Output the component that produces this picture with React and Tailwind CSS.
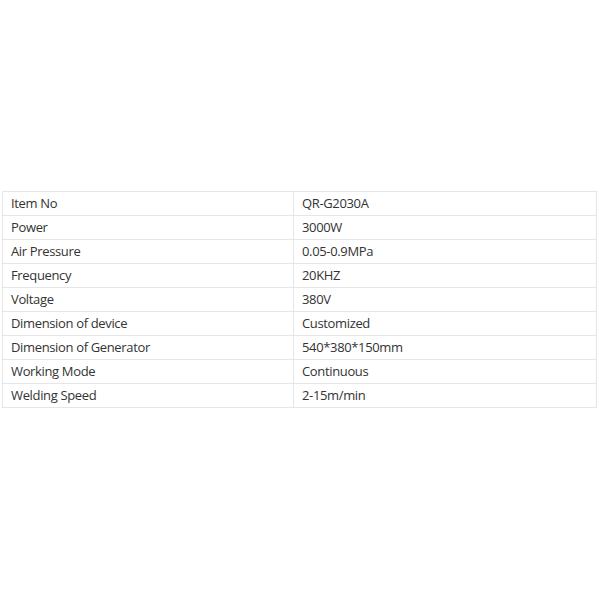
const rows = [
  ['Item No', 'QR-G2030A'],
  ['Power', '3000W'],
  ['Air Pressure', '0.05-0.9MPa'],
  ['Frequency', '20KHZ'],
  ['Voltage', '380V'],
  ['Dimension of device', 'Customized'],
  ['Dimension of Generator', '540*380*150mm'],
  ['Working Mode', 'Continuous'],
  ['Welding Speed', '2-15m/min'],
]

export default function App() {
  return (
    <div className="w-[600px] h-[600px] bg-white pt-[191px] pl-[2px]" style={{ fontFamily: '"Open Sans", "Noto Sans", sans-serif' }}>
      <table className="w-[595px] border-collapse table-fixed text-[13px] tracking-[-0.35px] text-[#333]">
        <tbody>
          {rows.map(([k, v]) => (
            <tr key={k} className="h-[24px]">
              <td className="w-[291px] border border-[#e6e6e6] pl-[8px] py-0 leading-[23px]">{k}</td>
              <td className="border border-[#e6e6e6] pl-[8px] py-0 leading-[23px]">{v}</td>
            </tr>
          ))}
        </tbody>
      </table>
    </div>
  )
}
